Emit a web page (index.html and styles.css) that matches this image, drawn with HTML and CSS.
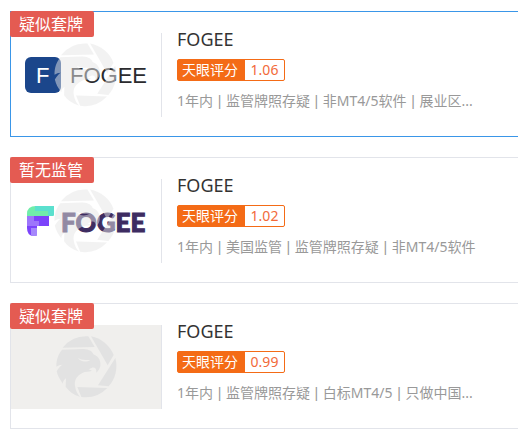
FILE: index.html
```
<!DOCTYPE html>
<html lang="zh-CN">
<head>
  <meta charset="UTF-8">
  <meta name="viewport" content="width=device-width, initial-scale=1.0">
  <title>FOGEE</title>
  <link rel="stylesheet" href="styles.css">
</head>
<body>
  <svg class="defs" width="0" height="0" aria-hidden="true">
    <symbol id="eagle" viewBox="0 0 216 216">
      <path d="M38 53A91 91 0 0 1 115 19L134 51Z"/>
      <path d="M123 19A91 91 0 0 1 191 75L173 106Z"/>
      <path d="M196 84A91 91 0 0 1 176 169L144 166Z"/>
      <path d="M82 171L172 174A91 91 0 0 1 94 201Z"/>
      <path fill-rule="evenodd" d="M36 59L100 57C119 58 128 65 130 73C147 79 153 94 151 108C149 117 145 123 139 128C140 116 135 111 126 113L116 118L126 122C116 126 106 123 97 129C79 139 73 150 75 168C77 183 83 193 90 200C72 195 57 184 47 170L48 145C40 151 38 157 39 161C29 149 23 137 20 124C25 115 30 109 37 104C30 104 25 106 19 110C19 90 24 74 36 59ZM84 84C90 94 106 99 121 90L107 90C97 90 91 87 84 84Z"/>
    </symbol>
  </svg>

  <div class="list">
    <div class="card active">
      <span class="tag">疑似套牌</span>
      <div class="logo">
        <svg viewBox="0 0 150 84" role="img" aria-label="FOGEE">
          <rect x="14" y="24" width="36" height="36" rx="6" fill="#1b468b"/>
          <text class="mark" x="25" y="50">F</text>
          <text class="name" x="59" y="50">FOGEE</text>
          <use class="water" href="#eagle" x="37" y="4" width="74" height="74"/>
        </svg>
      </div>
      <div class="info">
        <h3>FOGEE</h3>
        <div class="score"><span>天眼评分</span><b>1.06</b></div>
        <p>1年内 <i>|</i> 监管牌照存疑 <i>|</i> 非MT4/5软件 <i>|</i> 展业区...</p>
      </div>
    </div>

    <div class="card">
      <span class="tag">暂无监管</span>
      <div class="logo">
        <svg viewBox="0 0 150 84" role="img" aria-label="FOGEE">
          <path d="M16 37V35Q16 27 25 27H43V36L42 37Z" fill="#70edaa"/>
          <path d="M24 32V27H43V36L42 37H37V32Z" fill="#5be0ce"/>
          <path d="M16 37H38V47H26V56L25 57H22Q16 56 16 49Z" fill="#7c43fb"/>
          <path d="M16 37H23V42H28V47H16Z" fill="#9d75fb"/>
          <path d="M20 49H26V56L25 57H20Z" fill="#a587fb"/>
          <text class="name heavy" x="50" y="53">FOGEE</text>
          <use class="water" href="#eagle" x="37" y="4" width="74" height="74"/>
        </svg>
      </div>
      <div class="info">
        <h3>FOGEE</h3>
        <div class="score"><span>天眼评分</span><b>1.02</b></div>
        <p>1年内 <i>|</i> 美国监管 <i>|</i> 监管牌照存疑 <i>|</i> 非MT4/5软件</p>
      </div>
    </div>

    <div class="card">
      <span class="tag">疑似套牌</span>
      <div class="logo empty">
        <svg viewBox="0 0 150 84" aria-hidden="true">
          <use href="#eagle" x="39" y="5" width="72" height="72" fill="#e2e2e2"/>
        </svg>
      </div>
      <div class="info">
        <h3>FOGEE</h3>
        <div class="score"><span>天眼评分</span><b>0.99</b></div>
        <p>1年内 <i>|</i> 监管牌照存疑 <i>|</i> 白标MT4/5 <i>|</i> 只做中国...</p>
      </div>
    </div>
  </div>
</body>
</html>
```
FILE: styles.css
```
* {
  box-sizing: border-box;
}
body {
  margin: 0;
  background-color: #fff;
  font-family: "Noto Sans", "Noto Sans CJK SC", sans-serif;
}
.defs {
  position: absolute;
}
.list {
  display: flex;
  flex-direction: column;
  gap: 20px;
  padding: 11px 0 9px 10px;
}
.card {
  position: relative;
  display: flex;
  padding: 21px 0 19px;
  border: 1px solid #e2e4ea;
  border-right: none;
}
.card.active {
  border-color: #3a96e8;
}
.tag {
  position: absolute;
  top: -1px;
  left: -1px;
  padding: 0 11px 0 9px;
  border-radius: 2px;
  background-color: #e45b52;
  color: #fff;
  font-size: 16px;
  line-height: 26px;
  white-space: nowrap;
}
.logo {
  flex: none;
  width: 151px;
  border-right: 1px solid #e2e4ea;
}
.logo.empty {
  background-color: #f0efed;
}
.logo svg {
  display: block;
  width: 100%;
}
.mark {
  fill: #fff;
  font: 22px "Liberation Sans", sans-serif;
}
.name {
  fill: #2b2b2e;
  font: 22px "Liberation Sans", sans-serif;
}
.heavy {
  fill: #3d2c61;
  stroke: #3d2c61;
  stroke-width: 1px;
  font: 900 26px Lato, sans-serif;
}
.water {
  fill: #e6e6e6;
  opacity: 0.5;
}
.info {
  flex: 1;
  min-width: 0;
  padding-left: 15px;
}
h3 {
  margin: 0 0 14px;
  color: #333;
  font-size: 18px;
  font-weight: 400;
  line-height: 12px;
}
.score {
  display: flex;
  width: 108px;
  border: 1px solid #f46b16;
  border-radius: 2px;
  font-size: 14px;
  line-height: 20px;
}
.score span {
  padding: 0 7px 0 4px;
  background-color: #f46b16;
  color: #fff;
}
.score b {
  flex: 1;
  color: #f26a3a;
  font-weight: 400;
  text-align: center;
}
p {
  margin: 10px 0 0;
  color: #999;
  font-size: 14px;
  line-height: 20px;
  white-space: nowrap;
}
p i {
  margin: 0 1px;
  font-family: "Liberation Sans", sans-serif;
  font-style: normal;
}
```
